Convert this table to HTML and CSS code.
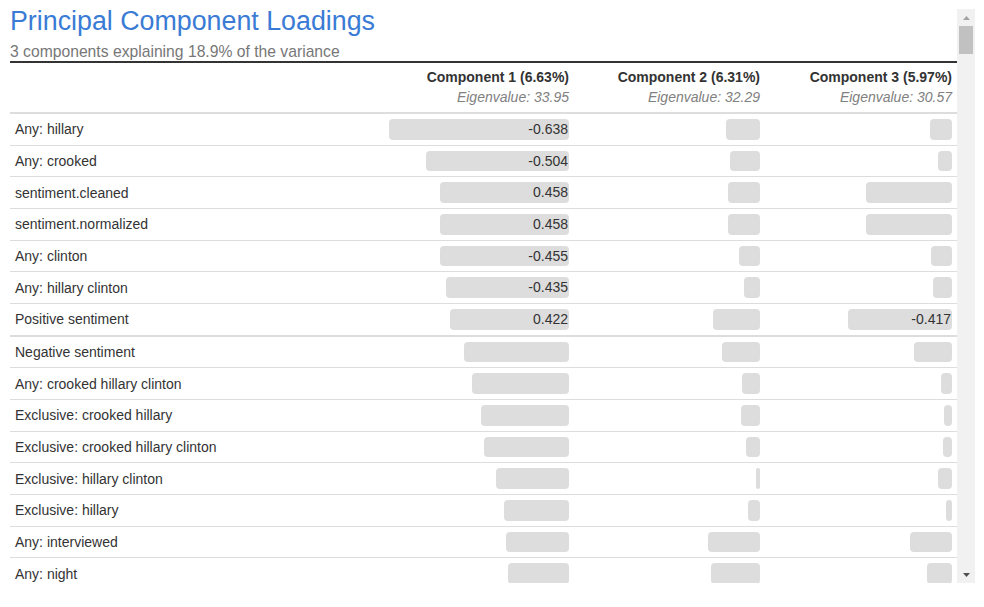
FILE: index.html
```html
<!DOCTYPE html>
<html lang="en">
<head>
<meta charset="utf-8">
<title>Principal Component Loadings</title>
<link rel="stylesheet" href="styles.css">
</head>
<body>
<div class="frame">
  <div class="content">
    <header class="head">
      <h1 class="title">Principal Component Loadings</h1>
      <p class="subtitle">3 components explaining 18.9% of the variance</p>
    </header>
    <div class="table-wrap">
    <table class="loadings">
      <colgroup>
        <col>
        <col class="c2">
        <col class="c3">
        <col class="c4">
      </colgroup>
      <thead>
        <tr>
          <th></th>
          <th>Component 1 (6.63%)<span class="eig">Eigenvalue: 33.95</span></th>
          <th>Component 2 (6.31%)<span class="eig">Eigenvalue: 32.29</span></th>
          <th>Component 3 (5.97%)<span class="eig">Eigenvalue: 30.57</span></th>
        </tr>
      </thead>
      <tbody class="strong">
        <tr><td>Any: hillary</td><td><div class="bar" style="width:100%">-0.638</div></td><td><div class="bar" style="width:18.7%"></div></td><td><div class="bar" style="width:12.2%"></div></td></tr>
        <tr><td>Any: crooked</td><td><div class="bar" style="width:79.3%">-0.504</div></td><td><div class="bar" style="width:16.7%"></div></td><td><div class="bar" style="width:7.7%"></div></td></tr>
        <tr><td>sentiment.cleaned</td><td><div class="bar" style="width:71.9%">0.458</div></td><td><div class="bar" style="width:17.9%"></div></td><td><div class="bar" style="width:47.4%"></div></td></tr>
        <tr><td>sentiment.normalized</td><td><div class="bar" style="width:71.9%">0.458</div></td><td><div class="bar" style="width:17.9%"></div></td><td><div class="bar" style="width:47.4%"></div></td></tr>
        <tr><td>Any: clinton</td><td><div class="bar" style="width:71.6%">-0.455</div></td><td><div class="bar" style="width:11.7%"></div></td><td><div class="bar" style="width:11.7%"></div></td></tr>
        <tr><td>Any: hillary clinton</td><td><div class="bar" style="width:68.4%">-0.435</div></td><td><div class="bar" style="width:8.8%"></div></td><td><div class="bar" style="width:10.3%"></div></td></tr>
        <tr><td>Positive sentiment</td><td><div class="bar" style="width:66.2%">0.422</div></td><td><div class="bar" style="width:25.7%"></div></td><td><div class="bar" style="width:56.9%">-0.417</div></td></tr>
      </tbody>
      <tbody>
        <tr><td>Negative sentiment</td><td><div class="bar" style="width:58.2%"></div></td><td><div class="bar" style="width:20.8%"></div></td><td><div class="bar" style="width:20.9%"></div></td></tr>
        <tr><td>Any: crooked hillary clinton</td><td><div class="bar" style="width:53.7%"></div></td><td><div class="bar" style="width:9.9%"></div></td><td><div class="bar" style="width:6.2%"></div></td></tr>
        <tr><td>Exclusive: crooked hillary</td><td><div class="bar" style="width:48.7%"></div></td><td><div class="bar" style="width:10.5%"></div></td><td><div class="bar" style="width:4.5%"></div></td></tr>
        <tr><td>Exclusive: crooked hillary clinton</td><td><div class="bar" style="width:47.5%"></div></td><td><div class="bar" style="width:7.8%"></div></td><td><div class="bar" style="width:5.1%"></div></td></tr>
        <tr><td>Exclusive: hillary clinton</td><td><div class="bar" style="width:40.5%"></div></td><td><div class="bar" style="width:2.1%"></div></td><td><div class="bar" style="width:7.8%"></div></td></tr>
        <tr><td>Exclusive: hillary</td><td><div class="bar" style="width:35.9%"></div></td><td><div class="bar" style="width:6.6%"></div></td><td><div class="bar" style="width:3.5%"></div></td></tr>
        <tr><td>Any: interviewed</td><td><div class="bar" style="width:34.9%"></div></td><td><div class="bar" style="width:28.8%"></div></td><td><div class="bar" style="width:23%"></div></td></tr>
        <tr><td>Any: night</td><td><div class="bar" style="width:33.7%"></div></td><td><div class="bar" style="width:26.9%"></div></td><td><div class="bar" style="width:13.8%"></div></td></tr>
      </tbody>
    </table>
    </div>
  </div>
  <div class="scrollbar" aria-hidden="true">
    <div class="sb-btn"><svg width="7" height="4" viewBox="0 0 7 4"><polygon points="0,4 3.5,0 7,4" class="arrow-off"/></svg></div>
    <div class="sb-track"><div class="sb-thumb"></div></div>
    <div class="sb-btn"><svg width="7" height="4" viewBox="0 0 7 4"><polygon points="0,0 7,0 3.5,4" class="arrow-on"/></svg></div>
  </div>
</div>
</body>
</html>
```

FILE: styles.css
```css
html, body {
  margin: 0;
  padding: 0;
  background: #fff;
}

body {
  font-family: "Liberation Sans", Arial, sans-serif;
  color: #333;
}

.frame {
  display: flex;
  margin: 9px 9px 0 10px;
  height: 574px;
}

.content {
  flex: 1;
  min-width: 0;
  display: flex;
  flex-direction: column;
}

.title {
  margin: -3px 0 0;
  font-size: 26.8px;
  line-height: 31px;
  font-weight: normal;
  color: #3a7bd5;
}

.subtitle {
  margin: 5px 0 0;
  font-size: 15.7px;
  line-height: 19px;
  color: #777;
  border-bottom: 2px solid #333;
}

.table-wrap {
  flex: 1;
  min-height: 0;
  overflow: hidden;
}

.loadings {
  width: 100%;
  table-layout: fixed;
  border-collapse: separate;
  border-spacing: 0;
  font-size: 14px;
}

.loadings .c2 { width: 190px; }
.loadings .c3 { width: 191px; }
.loadings .c4 { width: 192px; }

.loadings th {
  padding: 5px;
  text-align: right;
  vertical-align: bottom;
  font-weight: bold;
  line-height: 19.5px;
  color: #333;
  border-bottom: 2px solid #ddd;
  white-space: nowrap;
}

.eig {
  display: block;
  font-style: italic;
  font-weight: normal;
  color: #808080;
}

.loadings td {
  padding: 5px;
  line-height: 20px;
  vertical-align: middle;
  border-bottom: 1px solid #ddd;
  white-space: nowrap;
}

.loadings tbody.strong tr:last-child td {
  border-bottom-width: 2px;
}

.bar {
  box-sizing: border-box;
  height: 20.67px;
  line-height: 20.67px;
  margin-left: auto;
  padding-right: 1px;
  background: #ddd;
  border-radius: 4px;
  text-align: right;
  color: #333;
}

.scrollbar {
  width: 18px;
  flex: none;
  display: flex;
  flex-direction: column;
  background: #f1f1f1;
}

.sb-btn {
  height: 17px;
  display: flex;
  align-items: center;
  justify-content: center;
}

.sb-btn svg { display: block; }

.arrow-off { fill: #a3a3a3; }
.arrow-on { fill: #505050; }

.sb-track {
  flex: 1;
  padding: 0 2px;
}

.sb-thumb {
  height: 28px;
  background: #c1c1c1;
}
```
